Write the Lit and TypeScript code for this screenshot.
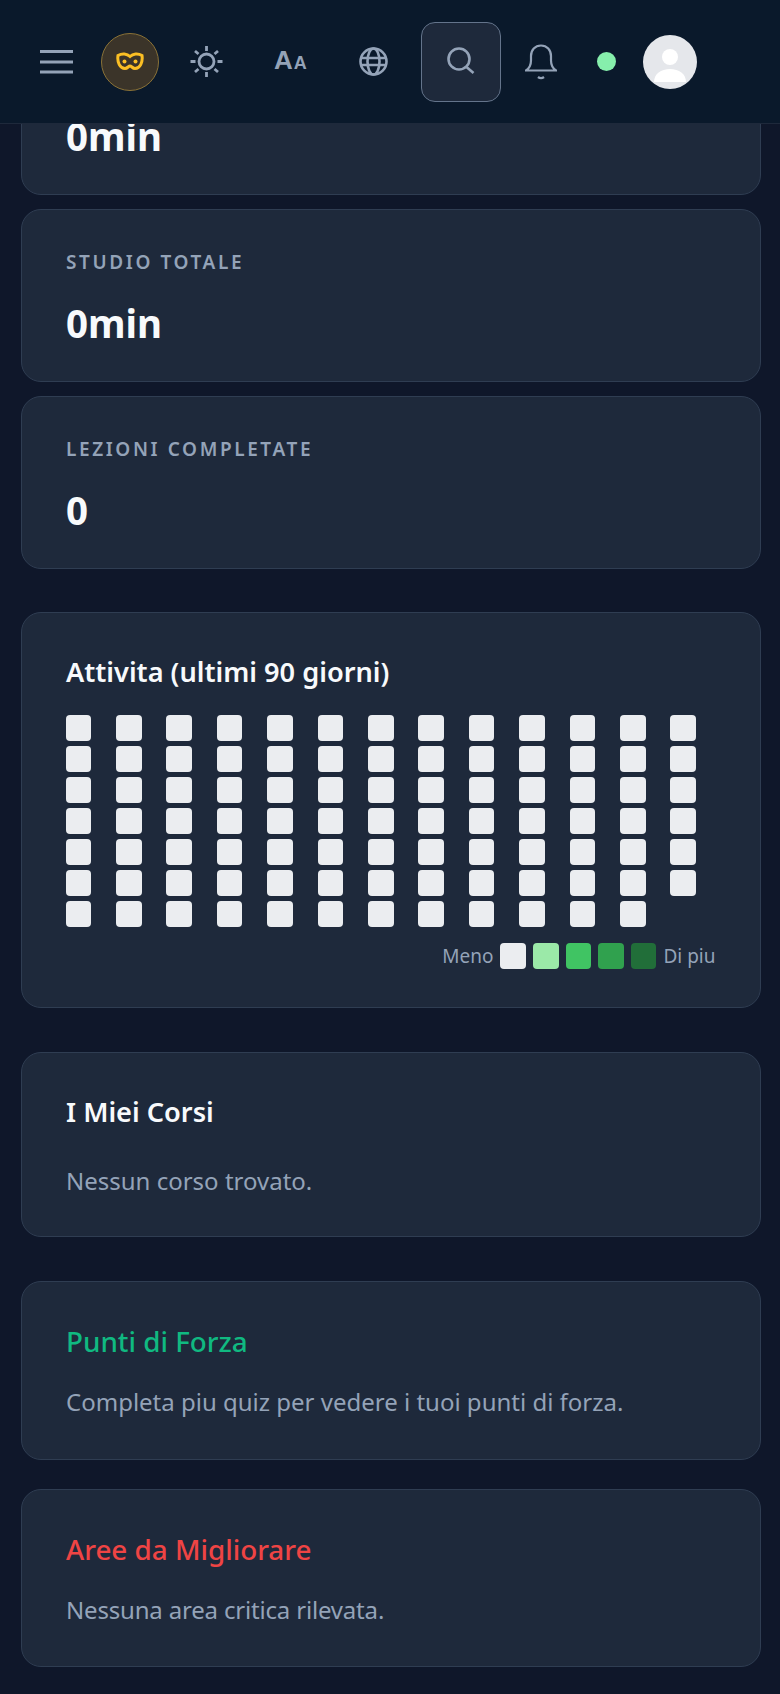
import {LitElement, html, css} from 'lit';
import {customElement} from 'lit/decorators.js';

const cells = Array.from({length: 90});
const legend = ['#ebedf0', '#9be9a8', '#40c463', '#30a14e', '#216e39'];

@customElement('app-root')
export class AppRoot extends LitElement {
    static styles = css`
        :host {
            display: block;
            position: relative;
            height: 1694px;
            overflow: hidden;
            background: #0f172a;
            font-family: "Noto Sans", "Open Sans", sans-serif;
            color: #f8fafc;
        }
        .topbar {
            position: absolute;
            top: 0;
            left: 0;
            right: 0;
            height: 123px;
            border-bottom: 1px solid #1e293b;
            background: #0a192b;
            display: flex;
            align-items: center;
            padding-left: 40px;
            z-index: 2;
        }
        .topbar svg { display: block; flex: none; }
        .mask {
            width: 58px;
            height: 58px;
            box-sizing: border-box;
            border-radius: 50%;
            background: #3b3429;
            border: 1px solid #8a7237;
            display: flex;
            align-items: center;
            justify-content: center;
            margin-left: 27px;
        }
        .sun { margin-left: 31px; }
        .aa {
            width: 32px;
            margin-left: 51px;
            display: flex;
            align-items: baseline;
            gap: 1px;
            font-family: "Liberation Sans", sans-serif;
            font-weight: 700;
            color: #94a3b8;
            line-height: 30px;
        }
        .aa .big { font-size: 26px; }
        .aa .small { font-size: 18px; }
        .globe { margin-left: 53px; }
        .search {
            width: 80px;
            height: 80px;
            box-sizing: border-box;
            border-radius: 14px;
            border: 1px solid #64748b;
            background: #1e293b;
            display: flex;
            align-items: center;
            justify-content: center;
            margin-left: 33px;
        }
        .bell { margin-left: 24px; }
        .dot {
            width: 19px;
            height: 19px;
            border-radius: 50%;
            background: #86efac;
            margin-left: 40px;
        }
        .avatar {
            width: 54px;
            height: 54px;
            border-radius: 50%;
            background: #e5e7eb;
            overflow: hidden;
            margin-left: 27px;
        }
        main {
            padding: 22px 19.500px 0 21px;
        }
        .card {
            box-sizing: border-box;
            background: #1e293b;
            border: 1px solid #2f3d52;
            border-radius: 20px;
            padding: 0 44px;
        }
        .stat { height: 173px; padding-top: 40px; margin-bottom: 14px; }
        .stat.last { margin-bottom: 0; }
        .label {
            font-size: 19px;
            line-height: 24px;
            font-weight: 600;
            letter-spacing: 2.600px;
            color: #94a3b8;
            text-transform: uppercase;
        }
        .value {
            font-size: 38.500px;
            line-height: 48px;
            font-weight: 700;
            margin-top: 25px;
        }
        h3 {
            margin: 0;
            font-size: 27.200px;
            line-height: 36px;
            font-weight: 600;
            color: #f8fafc;
        }
        p {
            margin: 0;
            font-size: 24px;
            line-height: 32px;
            color: #94a3b8;
        }
        .activity { height: 396px; margin-top: 43px; padding-top: 41px; }
        .heat {
            display: grid;
            grid-auto-flow: column;
            grid-template-rows: repeat(7, 26px);
            grid-auto-columns: 25.600px;
            gap: 5px 24.820px;
            margin: 25px 0 0 -0.500px;
        }
        .cell { border-radius: 4px; background: #ebedf0; }
        .legend {
            display: flex;
            justify-content: flex-end;
            align-items: center;
            gap: 7px;
            margin-top: 16px;
            font-size: 19px;
            color: #94a3b8;
        }
        .legend .cell { width: 25.600px; height: 26px; }
        .courses { height: 185px; margin-top: 44px; padding-top: 41px; }
        .courses p { margin-top: 35px; }
        .forza { height: 179px; margin-top: 44px; padding-top: 41px; }
        .forza h3 { color: #10b981; font-weight: 500; font-size: 27.800px; }
        .forza p { margin-top: 27px; }
        .aree { height: 178px; margin-top: 29px; padding-top: 41px; }
        .aree h3 { color: #ef4444; font-weight: 500; font-size: 27.800px; }
        .aree p { margin-top: 27px; letter-spacing: -0.180px; }
    `;

    render() {
        return html`
            <div class="topbar">
                <svg width="34" height="26" viewBox="0 0 34 26" fill="none" stroke="#94a3b8" stroke-width="3">
                    <path d="M0 2.500h33M0 13h33M0 23h33"/>
                </svg>
                <div class="mask">
                    <svg width="28" height="20" viewBox="0 0 28 20" fill="none" stroke="#fbbf24" stroke-width="3">
                        <path d="M2 3.500c4-2.500 9-2 12 1 3-3 8-3.500 12-1 1 7-2 13-7 13-2.500 0-3.500-2.500-5-2.500s-2.500 2.500-5 2.500C4 16.500 1 10.500 2 3.500z"/>
                        <circle cx="8.500" cy="9.500" r="2" fill="#fbbf24" stroke="none"/>
                        <circle cx="19.500" cy="9.500" r="2" fill="#fbbf24" stroke="none"/>
                    </svg>
                </div>
                <svg class="sun" width="33" height="33" viewBox="0 0 33 33" fill="none" stroke="#94a3b8" stroke-width="2.800">
                    <circle cx="16.500" cy="16.500" r="7.500"/>
                    <path d="M16.500 1v5M16.500 27v5M0.500 16.500h5M27.500 16.500h5M5 6l3.500 3M28 6l-3.500 3M5 27l3.500-3M28 27l-3.500-3"/>
                </svg>
                <div class="aa"><span class="big">A</span><span class="small">A</span></div>
                <svg class="globe" width="29" height="29" viewBox="0 0 29 29" fill="none" stroke="#94a3b8" stroke-width="2.600">
                    <circle cx="14.500" cy="14.500" r="13"/>
                    <ellipse cx="14.500" cy="14.500" rx="6" ry="13"/>
                    <path d="M2 11h25M2 18h25"/>
                </svg>
                <div class="search">
                    <svg width="30" height="30" viewBox="0 0 30 30" fill="none" stroke="#94a3b8" stroke-width="2.600">
                        <circle cx="13" cy="12" r="10.500"/>
                        <path d="M20.500 20l7 6"/>
                    </svg>
                </div>
                <svg class="bell" width="32" height="36" viewBox="0 0 32 36" fill="none" stroke="#94a3b8" stroke-width="2.200">
                    <path d="M1 26.500h30c-3-2-5-5-5-10V12C26 6 22 1.500 16 1.500S6 6 6 12v4.500c0 5-2 8-5 10z"/>
                    <path d="M13 33c2 1.500 4 1.500 6 0" stroke-width="2.400"/>
                </svg>
                <div class="dot"></div>
                <div class="avatar">
                    <svg width="54" height="54" viewBox="0 0 54 54" fill="#fff">
                        <circle cx="27" cy="22" r="8"/>
                        <path d="M11 47c0-8 7-13 16-13s16 5 16 13z"/>
                    </svg>
                </div>
            </div>
            <main>
                <div class="card stat">
                    <div class="label">Studio oggi</div>
                    <div class="value">0min</div>
                </div>
                <div class="card stat">
                    <div class="label">Studio totale</div>
                    <div class="value">0min</div>
                </div>
                <div class="card stat last">
                    <div class="label">Lezioni completate</div>
                    <div class="value">0</div>
                </div>
                <div class="card activity">
                    <h3>Attivita (ultimi 90 giorni)</h3>
                    <div class="heat">${cells.map(() => html`<div class="cell"></div>`)}</div>
                    <div class="legend">
                        <span>Meno</span>
                        ${legend.map(c => html`<div class="cell" style="background:${c}"></div>`)}
                        <span>Di piu</span>
                    </div>
                </div>
                <div class="card courses">
                    <h3>I Miei Corsi</h3>
                    <p>Nessun corso trovato.</p>
                </div>
                <div class="card forza">
                    <h3>Punti di Forza</h3>
                    <p>Completa piu quiz per vedere i tuoi punti di forza.</p>
                </div>
                <div class="card aree">
                    <h3>Aree da Migliorare</h3>
                    <p>Nessuna area critica rilevata.</p>
                </div>
            </main>
        `;
    }
}
